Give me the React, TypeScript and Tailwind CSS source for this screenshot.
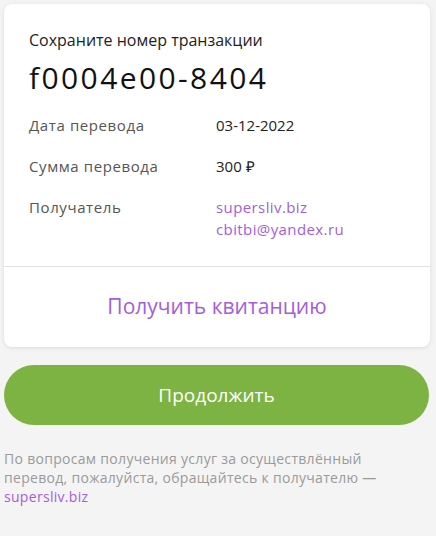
const rows = [
    { label: 'Дата перевода', value: ['03-12-2022'] },
    { label: 'Сумма перевода', value: ['300 ₽'] },
];

const App = () => {
    return (
        <div
            className="min-h-[536px] bg-[#f4f4f4] pt-1 px-1"
            style={{ fontFamily: '"Open Sans", "Liberation Sans", sans-serif' }}
        >
            {/* Transaction card */}
            <div className="bg-white rounded-lg shadow-[0_1px_4px_rgba(0,0,0,0.1)] mr-[2px]">
                <div className="pl-[25px] pr-4 pt-[26px] pb-[26px]">
                    <div className="text-[16px] leading-5 text-[#222]">Сохраните номер транзакции</div>
                    <div className="mt-[10px] text-[30px] leading-9 tracking-[2.4px] text-[#111]">f0004e00-8404</div>

                    <div className="mt-[19px] flex flex-col gap-[21px]">
                        {rows.map((r) => (
                            <div key={r.label} className="flex text-[15px] leading-5">
                                <span className="w-[187px] text-[#555] tracking-[0.6px]">{r.label}</span>
                                <span className="text-[#222]">{r.value[0]}</span>
                            </div>
                        ))}
                        <div className="flex text-[15px] leading-[22px] -mt-[1px]">
                            <span className="w-[187px] text-[#555] tracking-[0.6px]">Получатель</span>
                            <div className="flex flex-col text-[#a35ee0] tracking-[0.4px]">
                                <span>supersliv.biz</span>
                                <span>cbitbi@yandex.ru</span>
                            </div>
                        </div>
                    </div>
                </div>

                {/* Receipt link */}
                <div className="border-t border-[#e2e2e2] h-[81px] flex items-center justify-center">
                    <span className="text-[21px] text-[#a35ee0]">Получить квитанцию</span>
                </div>
            </div>

            {/* Continue */}
            <button
                type="button"
                className="mt-[18px] w-[425px] h-[60px] rounded-full bg-[#7cb342] text-white text-[19px]"
            >
                Продолжить
            </button>

            <p className="mt-6 text-[14px] leading-[19px] tracking-[0.3px] text-[#9a9a9a] pr-8">
                По вопросам получения услуг за осуществлённый перевод, пожалуйста, обращайтесь к получателю —{' '}
                <span className="text-[#a35ee0]">supersliv.biz</span>
            </p>
        </div>
    );
};

export default App;
